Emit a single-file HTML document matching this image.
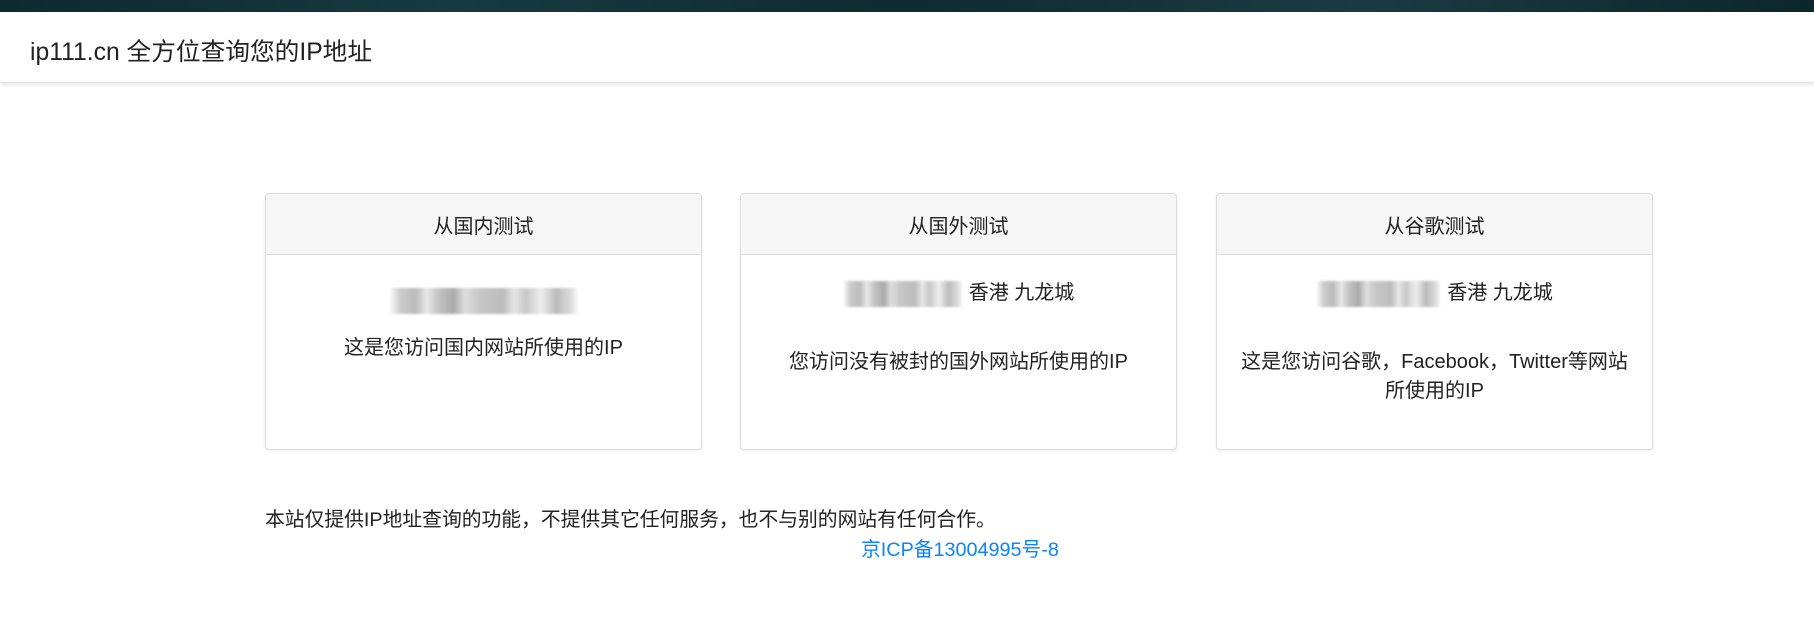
<!DOCTYPE html>
<html><head><meta charset="utf-8"><style>
body{margin:0;width:1814px;height:631px;background:#fff;font-family:"Liberation Sans","Noto Sans CJK SC",sans-serif;color:#212529;position:relative;overflow:hidden}
.top{position:absolute;left:0;top:0;width:1814px;height:12px;background:linear-gradient(90deg,#0d2a2f,#163a40,#0e2c31,#1a3b42,#0d262b)}
.nav{position:absolute;left:0;top:12px;width:1814px;height:70px;background:#fff;box-shadow:0 2px 4px rgba(0,0,0,.1);border-bottom:1px solid #e3e3e3}
.nav span{position:absolute;left:30px;top:20px;font-size:24.7px;color:#222}
.card{position:absolute;top:193px;width:435px;height:255px;border:1px solid #dcdcdc;border-radius:4px;box-shadow:0 1px 3px rgba(0,0,0,.08);overflow:hidden}
.hd{height:60px;background:#f6f6f6;border-bottom:1px solid #dedede;text-align:center;line-height:66px;font-size:20px;color:#222}
.t{position:absolute;left:0;width:100%;text-align:center;font-size:20px;line-height:29px;color:#222}
.blur{display:inline-block;vertical-align:middle;height:26px;background:linear-gradient(90deg,#fff 0,#ccc 6%,#bbb 14%,#e8e8e8 20%,#c4c4c4 26%,#aaa 34%,#ddd 40%,#c6c6c6 48%,#bdbdbd 60%,#e6e6e6 66%,#c8c8c8 72%,#eee 80%,#bbb 88%,#ddd 96%,#fff 100%);filter:blur(1px);margin-right:6px}
.foot{position:absolute;left:265px;top:503px;font-size:19.8px;color:#222}
.link{position:absolute;left:861px;top:533px;font-size:19.8px;color:#0a84ff}
</style></head><body>
<div class="top"></div>
<div class="nav"><span>ip111.cn 全方位查询您的IP地址</span></div>

<div class="card" style="left:265px">
<div class="hd">从国内测试</div>
<div class="t" style="top:92px"><span class="blur" style="width:190px;margin:0"></span></div>
<div class="t" style="top:140px">这是您访问国内网站所使用的IP</div>
</div>

<div class="card" style="left:740px">
<div class="hd">从国外测试</div>
<div class="t" style="top:85px"><span class="blur" style="width:120px"></span>香港 九龙城</div>
<div class="t" style="top:154px">您访问没有被封的国外网站所使用的IP</div>
</div>

<div class="card" style="left:1216px">
<div class="hd">从谷歌测试</div>
<div class="t" style="top:85px"><span class="blur" style="width:125px"></span>香港 九龙城</div>
<div class="t" style="top:154px">这是您访问谷歌，Facebook，Twitter等网站<br>所使用的IP</div>
</div>

<div class="foot">本站仅提供IP地址查询的功能，不提供其它任何服务，也不与别的网站有任何合作。</div>
<div class="link">京ICP备13004995号-8</div>
</body></html>
